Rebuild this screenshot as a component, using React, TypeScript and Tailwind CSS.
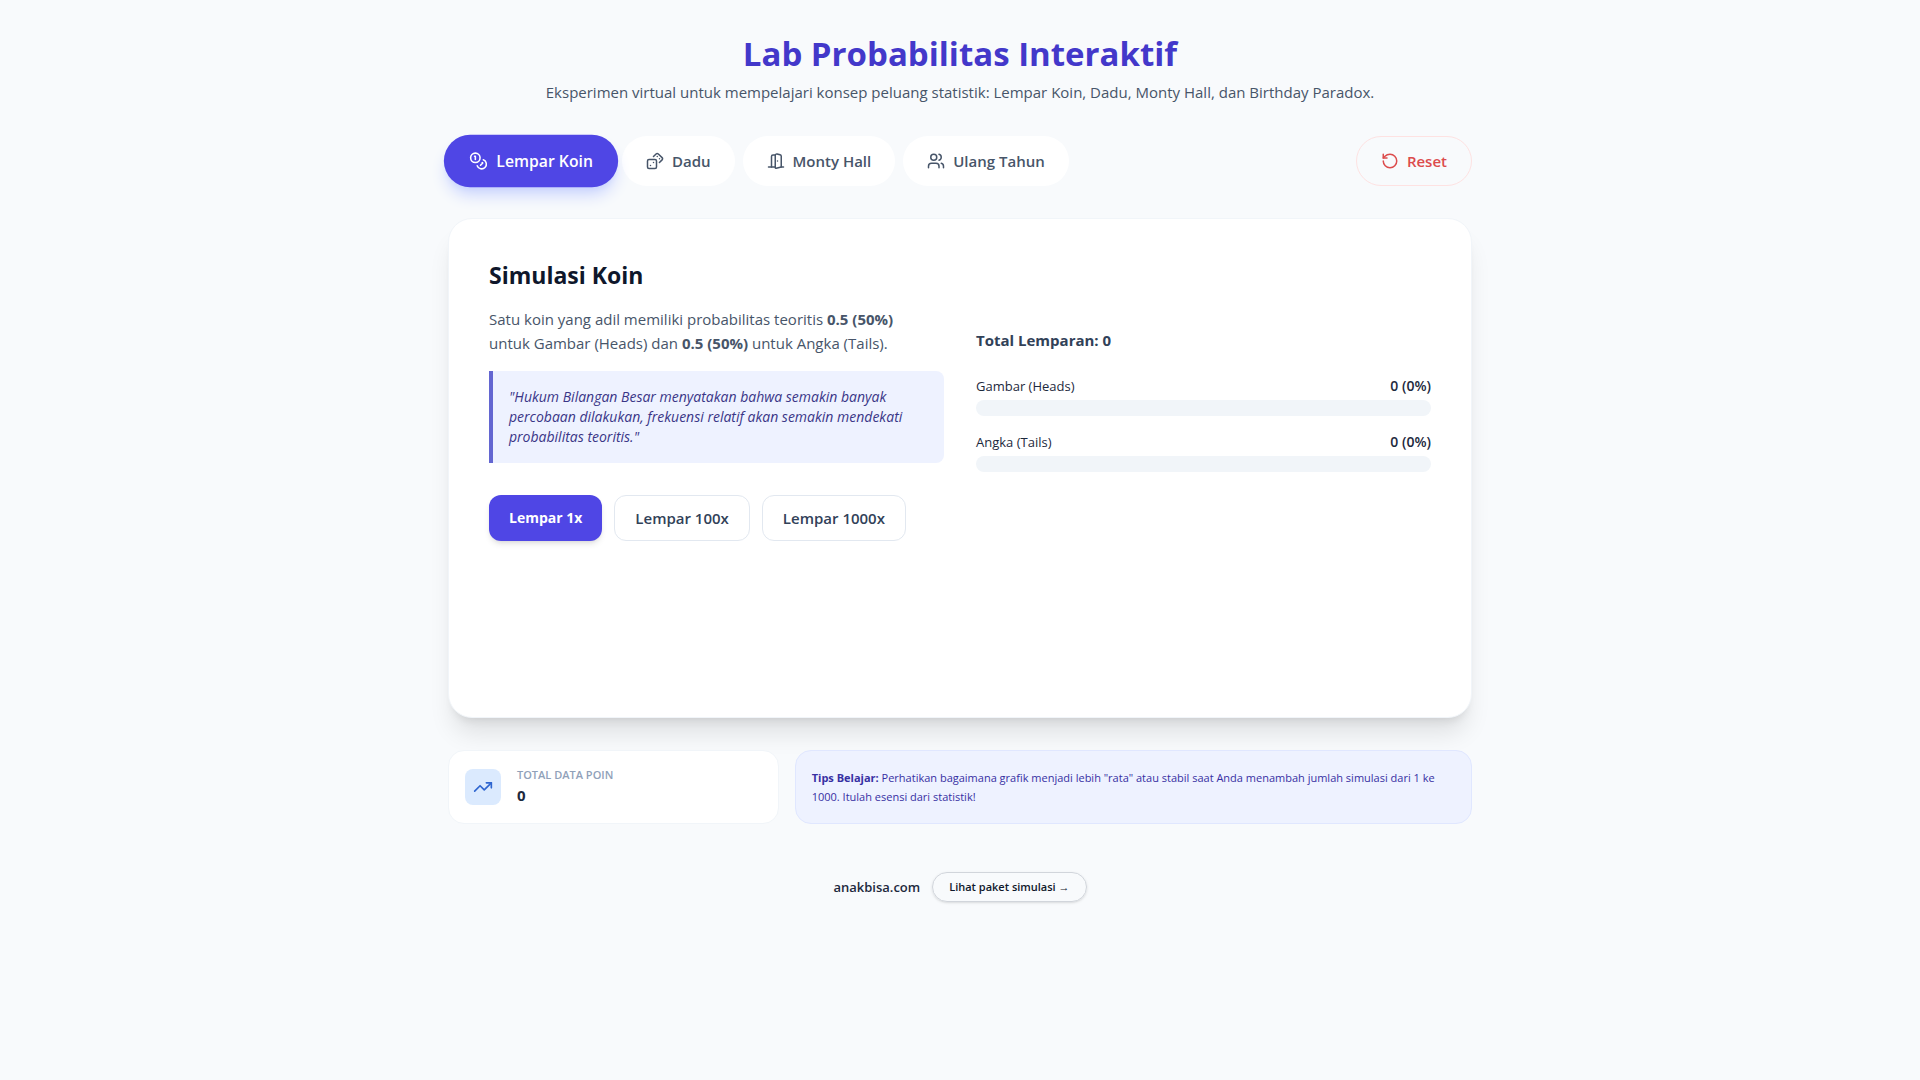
import React, { useState } from 'react';
import { Coins, Dices, DoorOpen, RotateCcw, TrendingUp, Users } from 'lucide-react';

type TabId = 'coin' | 'dice' | 'monty' | 'birthday';

const TABS = [
  { id: 'coin', label: 'Lempar Koin', icon: Coins },
  { id: 'dice', label: 'Dadu', icon: Dices },
  { id: 'monty', label: 'Monty Hall', icon: DoorOpen },
  { id: 'birthday', label: 'Ulang Tahun', icon: Users },
] as const;

interface ResultBarProps {
  label: string;
  count: number;
  total: number;
  barClass: string;
}

const ResultBar: React.FC<ResultBarProps> = ({ label, count, total, barClass }) => {
  const percent = total === 0 ? 0 : Math.round((count / total) * 1000) / 10;

  return (
    <div>
      <div className="mb-1 flex justify-between leading-5 text-slate-800">
        <span className="text-[13px]">{label}</span>
        <span className="text-[14px] font-semibold">
          {count} ({percent}%)
        </span>
      </div>
      <div className="h-4 overflow-hidden rounded-full bg-slate-100">
        <div className={`h-full ${barClass}`} style={{ width: `${percent}%` }} />
      </div>
    </div>
  );
};

export default function App() {
  const [tab, setTab] = useState<TabId>('coin');
  const [result, setResult] = useState({ heads: 0, tails: 0 });
  const total = result.heads + result.tails;

  const flip = (times: number) => {
    let heads = 0;
    for (let i = 0; i < times; i++) {
      if (Math.random() < 0.5) heads++;
    }
    setResult((prev) => ({ heads: prev.heads + heads, tails: prev.tails + times - heads }));
  };

  return (
    <div className="min-h-screen bg-slate-50 p-8 font-['Open_Sans',sans-serif] text-[15px] leading-6 text-slate-800">
      <div className="mx-auto max-w-5xl">
        <header className="mb-8 text-center">
          <h1 className="mb-1 text-[33px] leading-[44px] font-bold text-[#4338ca]">Lab Probabilitas Interaktif</h1>
          <p className="text-[#475569]">
            Eksperimen virtual untuk mempelajari konsep peluang statistik: Lempar Koin, Dadu, Monty Hall, dan Birthday
            Paradox.
          </p>
        </header>

        <nav className="mb-8 flex flex-wrap items-center gap-2">
          {TABS.map(({ id, label, icon: Icon }) => (
            <button
              key={id}
              type="button"
              onClick={() => setTab(id)}
              className={`flex h-[50px] items-center gap-2 rounded-full px-6 font-semibold ${
                tab === id
                  ? 'scale-105 bg-[#4f46e5] text-white shadow-lg shadow-[#c7d2fe]'
                  : 'bg-white text-[#475569]'
              }`}
            >
              <Icon size={18} />
              {label}
            </button>
          ))}
          <button
            type="button"
            onClick={() => setResult({ heads: 0, tails: 0 })}
            className="ml-auto flex h-[50px] items-center gap-2 rounded-full border border-[#fee2e2] px-6 font-semibold text-[#dc4c4c]"
          >
            <RotateCcw size={18} />
            Reset
          </button>
        </nav>

        <main className="mb-8 min-h-[500px] rounded-3xl border border-slate-100 bg-white p-10 shadow-xl">
          {tab === 'coin' && (
            <div className="grid items-center gap-8 md:grid-cols-2">
              <div>
                <h2 className="mb-4 text-[23px] leading-8 font-bold text-slate-900">Simulasi Koin</h2>
                <p className="mb-4 pr-5 text-[#475569]">
                  Satu koin yang adil memiliki probabilitas teoritis <strong>0.5 (50%)</strong> untuk Gambar (Heads)
                  dan <strong>0.5 (50%)</strong> untuk Angka (Tails).
                </p>
                <blockquote className="mb-8 rounded-r-lg border-l-4 border-[#6366d1] bg-[#eef2ff] p-4 text-[14px] leading-5 text-[#3a3687] italic">
                  "Hukum Bilangan Besar menyatakan bahwa semakin banyak percobaan dilakukan, frekuensi relatif akan
                  semakin mendekati probabilitas teoritis."
                </blockquote>
                <div className="flex flex-wrap gap-3 font-semibold">
                  <button
                    type="button"
                    onClick={() => flip(1)}
                    className="h-[46px] rounded-xl bg-[#4f46e5] px-5 text-[14px] font-bold text-white shadow-md"
                  >
                    Lempar 1x
                  </button>
                  <button
                    type="button"
                    onClick={() => flip(100)}
                    className="h-[46px] rounded-xl border border-slate-200 px-5 text-slate-700"
                  >
                    Lempar 100x
                  </button>
                  <button
                    type="button"
                    onClick={() => flip(1000)}
                    className="h-[46px] rounded-xl border border-slate-200 px-5 text-slate-700"
                  >
                    Lempar 1000x
                  </button>
                </div>
              </div>
              <div>
                <h3 className="mb-6 font-bold text-slate-700">Total Lemparan: {total}</h3>
                <div className="space-y-4">
                  <ResultBar label="Gambar (Heads)" count={result.heads} total={total} barClass="bg-indigo-500" />
                  <ResultBar label="Angka (Tails)" count={result.tails} total={total} barClass="bg-emerald-500" />
                </div>
              </div>
            </div>
          )}
        </main>

        <div className="grid gap-4 md:grid-cols-3">
          <div className="flex items-center gap-4 rounded-2xl border border-slate-100 bg-white p-4">
            <div className="rounded-lg bg-[#dbeafe] p-2 text-[#2f66d0]">
              <TrendingUp size={20} />
            </div>
            <div>
              <div className="text-[11px] leading-4 font-semibold text-slate-400 uppercase">Total Data Poin</div>
              <div className="font-bold text-slate-800">{total}</div>
            </div>
          </div>
          <div className="flex items-center rounded-2xl border border-[#e0e7ff] bg-[#eef2ff] p-4 md:col-span-2">
            <p className="text-[11px] leading-[19px] text-[#3730a3]">
              <strong>Tips Belajar:</strong> Perhatikan bagaimana grafik menjadi lebih "rata" atau stabil saat Anda
              menambah jumlah simulasi dari 1 ke 1000. Itulah esensi dari statistik!
            </p>
          </div>
        </div>

        <footer className="mt-12 flex items-center justify-center gap-3">
          <span className="text-[13px] font-semibold text-slate-800">anakbisa.com</span>
          <a
            href="#paket"
            className="flex h-[30px] items-center rounded-full border border-[#d1d5db] px-4 text-[11px] font-semibold text-slate-900 shadow-sm"
          >
            Lihat paket simulasi →
          </a>
        </footer>
      </div>
    </div>
  );
}
